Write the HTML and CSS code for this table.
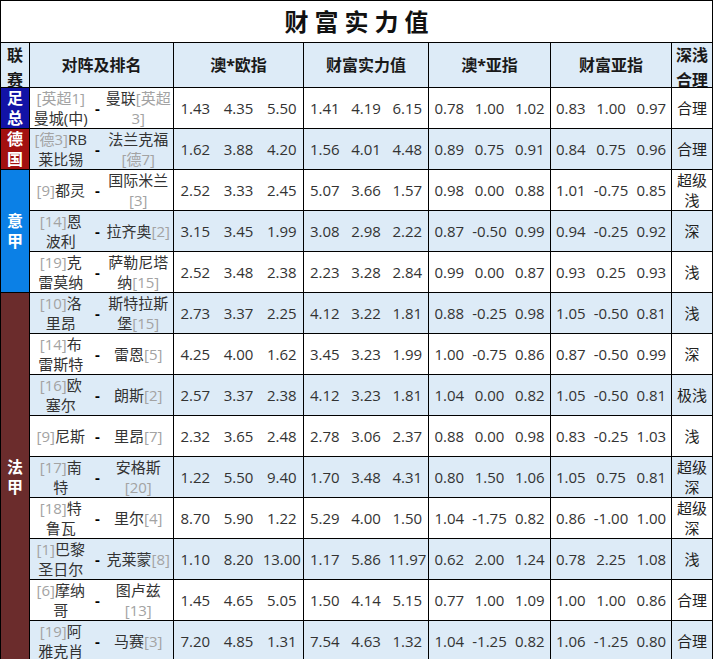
FILE: index.html
```html
<!DOCTYPE html>
<html lang="zh">
<head>
<meta charset="utf-8">
<title>财富实力值</title>
<link rel="stylesheet" href="styles.css">
</head>
<body>
<table class="grid">
  <colgroup>
    <col class="c-lg">
    <col class="c-home"><col class="c-dash"><col class="c-away">
    <col class="c-43"><col class="c-44"><col class="c-43">
    <col class="c-42"><col class="c-41"><col class="c-42">
    <col class="c-41"><col class="c-40"><col class="c-41">
    <col class="c-40"><col class="c-41"><col class="c-40">
    <col class="c-dq">
  </colgroup>
  <tr class="title-row"><td colspan="17" class="title">财富实力值</td></tr>
  <tr class="head">
    <th class="lg-h"><div class="stack">联赛</div></th>
    <th colspan="3" class="g">对阵及排名</th>
    <th colspan="3" class="g">澳*欧指</th>
    <th colspan="3" class="g">财富实力值</th>
    <th colspan="3" class="g">澳*亚指</th>
    <th colspan="3" class="g">财富亚指</th>
    <th class="g dq-h"><div class="stack">深浅合理</div></th>
  </tr>
  <tr class="r">
    <td class="lg fa">足总</td>
    <td class="home"><span class="rk">[英超1]</span><br>曼城(中)</td><td class="dash">-</td><td class="away">曼联<span class="rk">[英超<br>3]</span></td>
    <td class="n g">1.43</td><td class="n">4.35</td><td class="n">5.50</td>
    <td class="n g">1.41</td><td class="n">4.19</td><td class="n">6.15</td>
    <td class="n g">0.78</td><td class="n">1.00</td><td class="n">1.02</td>
    <td class="n g">0.83</td><td class="n">1.00</td><td class="n">0.97</td>
    <td class="dq g">合理</td>
  </tr>
  <tr class="r alt">
    <td class="lg de">德国</td>
    <td class="home"><span class="rk">[德3]</span>RB<br>莱比锡</td><td class="dash">-</td><td class="away">法兰克福<br><span class="rk">[德7]</span></td>
    <td class="n g">1.62</td><td class="n">3.88</td><td class="n">4.20</td>
    <td class="n g">1.56</td><td class="n">4.01</td><td class="n">4.48</td>
    <td class="n g">0.89</td><td class="n">0.75</td><td class="n">0.91</td>
    <td class="n g">0.84</td><td class="n">0.75</td><td class="n">0.96</td>
    <td class="dq g">合理</td>
  </tr>
  <tr class="r">
    <td class="lg it" rowspan="3">意甲</td>
    <td class="home"><span class="rk">[9]</span>都灵</td><td class="dash">-</td><td class="away">国际米兰<br><span class="rk">[3]</span></td>
    <td class="n g">2.52</td><td class="n">3.33</td><td class="n">2.45</td>
    <td class="n g">5.07</td><td class="n">3.66</td><td class="n">1.57</td>
    <td class="n g">0.98</td><td class="n">0.00</td><td class="n">0.88</td>
    <td class="n g">1.01</td><td class="n">-0.75</td><td class="n">0.85</td>
    <td class="dq g">超级<br>浅</td>
  </tr>
  <tr class="r alt">
    <td class="home"><span class="rk">[14]</span>恩<br>波利</td><td class="dash">-</td><td class="away">拉齐奥<span class="rk">[2]</span></td>
    <td class="n g">3.15</td><td class="n">3.45</td><td class="n">1.99</td>
    <td class="n g">3.08</td><td class="n">2.98</td><td class="n">2.22</td>
    <td class="n g">0.87</td><td class="n">-0.50</td><td class="n">0.99</td>
    <td class="n g">0.94</td><td class="n">-0.25</td><td class="n">0.92</td>
    <td class="dq g">深</td>
  </tr>
  <tr class="r">
    <td class="home"><span class="rk">[19]</span>克<br>雷莫纳</td><td class="dash">-</td><td class="away">萨勒尼塔<br>纳<span class="rk">[15]</span></td>
    <td class="n g">2.52</td><td class="n">3.48</td><td class="n">2.38</td>
    <td class="n g">2.23</td><td class="n">3.28</td><td class="n">2.84</td>
    <td class="n g">0.99</td><td class="n">0.00</td><td class="n">0.87</td>
    <td class="n g">0.93</td><td class="n">0.25</td><td class="n">0.93</td>
    <td class="dq g">浅</td>
  </tr>
  <tr class="r alt">
    <td class="lg fr" rowspan="9">法甲</td>
    <td class="home"><span class="rk">[10]</span>洛<br>里昂</td><td class="dash">-</td><td class="away">斯特拉斯<br>堡<span class="rk">[15]</span></td>
    <td class="n g">2.73</td><td class="n">3.37</td><td class="n">2.25</td>
    <td class="n g">4.12</td><td class="n">3.22</td><td class="n">1.81</td>
    <td class="n g">0.88</td><td class="n">-0.25</td><td class="n">0.98</td>
    <td class="n g">1.05</td><td class="n">-0.50</td><td class="n">0.81</td>
    <td class="dq g">浅</td>
  </tr>
  <tr class="r">
    <td class="home"><span class="rk">[14]</span>布<br>雷斯特</td><td class="dash">-</td><td class="away">雷恩<span class="rk">[5]</span></td>
    <td class="n g">4.25</td><td class="n">4.00</td><td class="n">1.62</td>
    <td class="n g">3.45</td><td class="n">3.23</td><td class="n">1.99</td>
    <td class="n g">1.00</td><td class="n">-0.75</td><td class="n">0.86</td>
    <td class="n g">0.87</td><td class="n">-0.50</td><td class="n">0.99</td>
    <td class="dq g">深</td>
  </tr>
  <tr class="r alt">
    <td class="home"><span class="rk">[16]</span>欧<br>塞尔</td><td class="dash">-</td><td class="away">朗斯<span class="rk">[2]</span></td>
    <td class="n g">2.57</td><td class="n">3.37</td><td class="n">2.38</td>
    <td class="n g">4.12</td><td class="n">3.23</td><td class="n">1.81</td>
    <td class="n g">1.04</td><td class="n">0.00</td><td class="n">0.82</td>
    <td class="n g">1.05</td><td class="n">-0.50</td><td class="n">0.81</td>
    <td class="dq g">极浅</td>
  </tr>
  <tr class="r">
    <td class="home"><span class="rk">[9]</span>尼斯</td><td class="dash">-</td><td class="away">里昂<span class="rk">[7]</span></td>
    <td class="n g">2.32</td><td class="n">3.65</td><td class="n">2.48</td>
    <td class="n g">2.78</td><td class="n">3.06</td><td class="n">2.37</td>
    <td class="n g">0.88</td><td class="n">0.00</td><td class="n">0.98</td>
    <td class="n g">0.83</td><td class="n">-0.25</td><td class="n">1.03</td>
    <td class="dq g">浅</td>
  </tr>
  <tr class="r alt">
    <td class="home"><span class="rk">[17]</span>南<br>特</td><td class="dash">-</td><td class="away">安格斯<br><span class="rk">[20]</span></td>
    <td class="n g">1.22</td><td class="n">5.50</td><td class="n">9.40</td>
    <td class="n g">1.70</td><td class="n">3.48</td><td class="n">4.31</td>
    <td class="n g">0.80</td><td class="n">1.50</td><td class="n">1.06</td>
    <td class="n g">1.05</td><td class="n">0.75</td><td class="n">0.81</td>
    <td class="dq g">超级<br>深</td>
  </tr>
  <tr class="r">
    <td class="home"><span class="rk">[18]</span>特<br>鲁瓦</td><td class="dash">-</td><td class="away">里尔<span class="rk">[4]</span></td>
    <td class="n g">8.70</td><td class="n">5.90</td><td class="n">1.22</td>
    <td class="n g">5.29</td><td class="n">4.00</td><td class="n">1.50</td>
    <td class="n g">1.04</td><td class="n">-1.75</td><td class="n">0.82</td>
    <td class="n g">0.86</td><td class="n">-1.00</td><td class="n">1.00</td>
    <td class="dq g">超级<br>深</td>
  </tr>
  <tr class="r alt">
    <td class="home"><span class="rk">[1]</span>巴黎<br>圣日尔</td><td class="dash">-</td><td class="away">克莱蒙<span class="rk">[8]</span></td>
    <td class="n g">1.10</td><td class="n">8.20</td><td class="n">13.00</td>
    <td class="n g">1.17</td><td class="n">5.86</td><td class="n">11.97</td>
    <td class="n g">0.62</td><td class="n">2.00</td><td class="n">1.24</td>
    <td class="n g">0.78</td><td class="n">2.25</td><td class="n">1.08</td>
    <td class="dq g">浅</td>
  </tr>
  <tr class="r">
    <td class="home"><span class="rk">[6]</span>摩纳<br>哥</td><td class="dash">-</td><td class="away">图卢兹<br><span class="rk">[13]</span></td>
    <td class="n g">1.45</td><td class="n">4.65</td><td class="n">5.05</td>
    <td class="n g">1.50</td><td class="n">4.14</td><td class="n">5.15</td>
    <td class="n g">0.77</td><td class="n">1.00</td><td class="n">1.09</td>
    <td class="n g">1.00</td><td class="n">1.00</td><td class="n">0.86</td>
    <td class="dq g">合理</td>
  </tr>
  <tr class="r alt">
    <td class="home"><span class="rk">[19]</span>阿<br>雅克肖</td><td class="dash">-</td><td class="away">马赛<span class="rk">[3]</span></td>
    <td class="n g">7.20</td><td class="n">4.85</td><td class="n">1.31</td>
    <td class="n g">7.54</td><td class="n">4.63</td><td class="n">1.32</td>
    <td class="n g">1.04</td><td class="n">-1.25</td><td class="n">0.82</td>
    <td class="n g">1.06</td><td class="n">-1.25</td><td class="n">0.80</td>
    <td class="dq g">合理</td>
  </tr>
</table>
</body>
</html>
```
FILE: styles.css
```css
html, body {
  margin: 0;
  padding: 0;
  background: #ffffff;
}

body {
  font-family: "Open Sans", "Noto Sans CJK SC", sans-serif;
  color: #333333;
}

.grid {
  border-collapse: collapse;
  table-layout: fixed;
  width: 713px;
}

.c-lg { width: 29px; }
.c-home { width: 62px; }
.c-dash { width: 12px; }
.c-away { width: 70px; }
.c-44 { width: 44px; }
.c-43 { width: 43px; }
.c-42 { width: 42px; }
.c-41 { width: 41px; }
.c-40 { width: 40px; }
.c-dq { width: 41px; }

.grid td,
.grid th {
  padding: 0;
  border-top: 1px solid #000;
  border-bottom: 1px solid #000;
  text-align: center;
  vertical-align: middle;
  font-size: 15px;
  line-height: 20px;
  overflow: hidden;
}

.grid .g {
  border-left: 1px solid #000;
}

.title-row {
  height: 42px;
}

.grid .title {
  border: 1px solid #000;
  font-size: 24px;
  font-weight: bold;
  letter-spacing: 6px;
  padding-left: 6px;
  color: #111111;
  line-height: 30px;
}

.head {
  height: 45px;
  background: #ddebf7;
}

.grid th {
  font-size: 16px;
  font-weight: bold;
  color: #1a1a1a;
}

.grid th.lg-h {
  border-left: 1px solid #000;
  vertical-align: top;
}

.grid th.dq-h {
  border-right: 1px solid #000;
  vertical-align: top;
}

.stack {
  height: 44px;
  overflow: hidden;
  line-height: 25px;
}

.r {
  height: 41px;
  background: #ffffff;
}

.r.alt {
  background: #ddebf7;
}

.grid td.lg {
  border-left: 1px solid #000;
  border-right: 1px solid #000;
  color: #ffffff;
  font-weight: bold;
  font-size: 16px;
  line-height: 20px;
}

.fa { background: #1212a6; }
.de { background: #a3100f; }
.it { background: #0b80e6; }
.fr { background: #6b2c2c; }

.home,
.away {
  color: #333333;
}

.rk {
  color: #a3a3a3;
}

.grid td.dash {
  font-weight: bold;
  color: #000000;
}

.n {
  color: #333333;
}

.grid td.dq {
  border-right: 1px solid #000;
  color: #222222;
}
```
